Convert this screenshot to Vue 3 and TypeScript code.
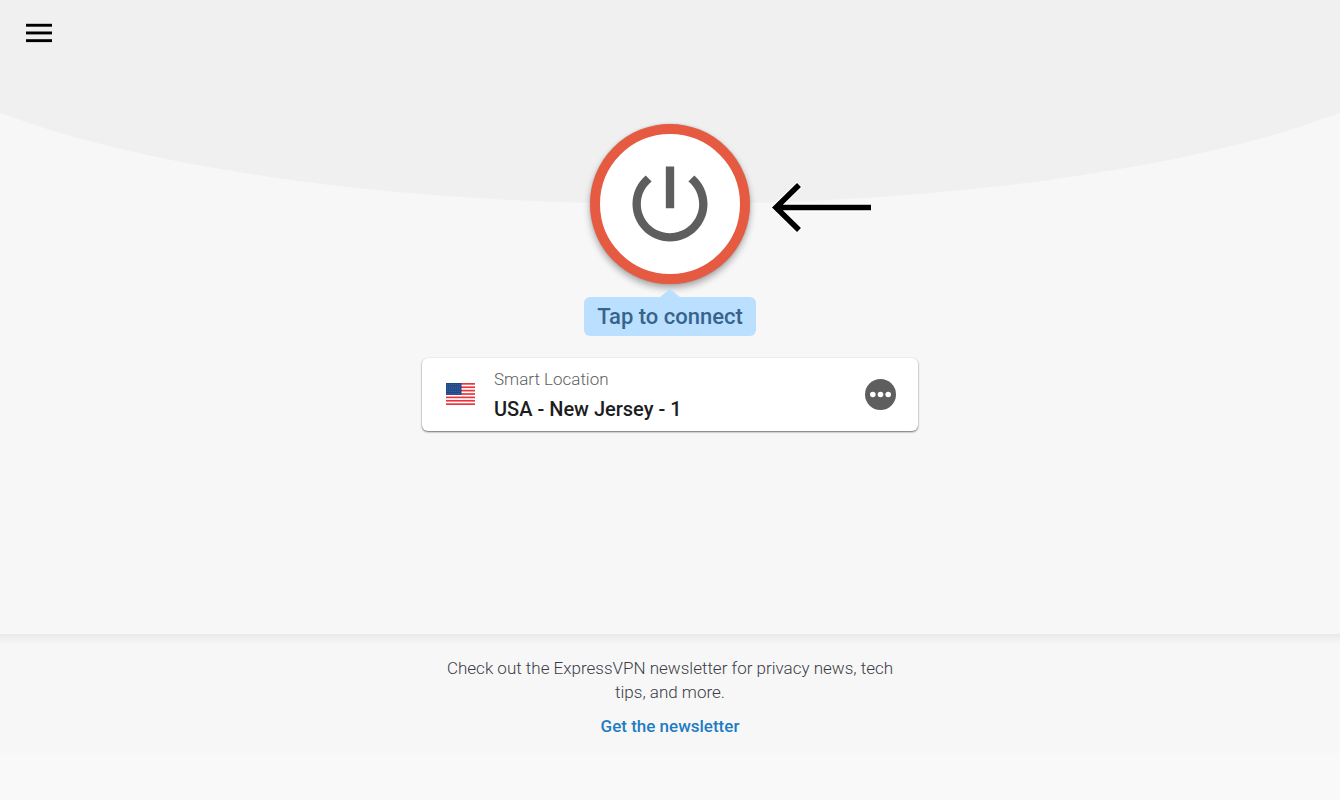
<script setup lang="ts">
import { ref } from 'vue'

const location = ref({ label: 'Smart Location', name: 'USA - New Jersey - 1' })
const stripes = [0, 2, 4, 6, 8, 10, 12]
const starRows = [1, 2, 3, 4, 5, 6]
const starCols = [1, 3, 5, 7, 9, 11, 13]
</script>

<template>
  <div class="app">
    <div class="backdrop" aria-hidden="true"></div>
    <header class="bar">
      <button class="menu" type="button" aria-label="Open menu">
        <svg viewBox="0 0 26 20" width="26" height="20" fill="#000">
          <rect y="0.800" width="26" height="2.900" />
          <rect y="8.500" width="26" height="2.900" />
          <rect y="16.200" width="26" height="2.900" />
        </svg>
      </button>
    </header>

    <main class="hero">
      <div class="power-wrap">
        <button class="power" type="button" aria-label="Connect">
          <svg viewBox="0 0 24 24" width="100" height="100" fill="#5e5e5e">
            <path d="M13 3h-2v10h2V3zm4.83 2.17l-1.42 1.42C17.99 7.86 19 9.81 19 12c0 3.87-3.13 7-7 7s-7-3.13-7-7c0-2.19 1.01-4.14 2.58-5.42L6.17 5.17C4.23 6.82 3 9.26 3 12c0 4.97 4.03 9 9 9s9-4.03 9-9c0-2.74-1.23-5.18-3.17-6.83z" />
          </svg>
        </button>
        <svg class="pointer" viewBox="0 0 104 56" width="104" height="56" fill="none" aria-hidden="true">
          <path d="M102 28.500H8M30.500 5.500L7 28.500L30.500 51.500" stroke="#fff" stroke-width="8" />
          <path d="M102 28.500H8M30 6L7 28.500L30 51" stroke="#000" stroke-width="5.600" />
        </svg>
      </div>

      <p class="tip">Tap to connect</p>

      <section class="card">
        <svg class="flag" viewBox="0 0 29 22" width="29" height="22" role="img" aria-label="United States">
          <rect width="29" height="22" fill="#fff" />
          <rect v-for="s in stripes" :key="s" :y="(s * 22) / 13" width="29" :height="22 / 13" fill="#e8343c" />
          <rect width="15.500" height="11.850" fill="#1f4788" />
          <template v-for="r in starRows" :key="r">
            <circle v-for="c in starCols" :key="c" :cx="c + (r % 2) * 0.8" :cy="r * 1.8 - 0.4" r="0.400" fill="#7f9cc9" />
          </template>
        </svg>
        <div class="place">
          <span class="label">{{ location.label }}</span>
          <strong class="name">{{ location.name }}</strong>
        </div>
        <button class="more" type="button" aria-label="Choose another location">
          <svg viewBox="0 0 31 31" width="31" height="31">
            <circle cx="15.500" cy="15.500" r="15.500" fill="#5e5e5e" />
            <g fill="#fff">
              <circle cx="7.800" cy="15.500" r="2.800" />
              <circle cx="15.500" cy="15.500" r="2.800" />
              <circle cx="23.200" cy="15.500" r="2.800" />
            </g>
          </svg>
        </button>
      </section>
    </main>

    <footer class="news">
      <p class="blurb">Check out the ExpressVPN newsletter for privacy news, tech tips, and more.</p>
      <a class="link" href="#newsletter">Get the newsletter</a>
    </footer>
    <div class="navbar" aria-hidden="true"></div>
  </div>
</template>

<style>
body {
  margin: 0;
}
</style>

<style scoped>
.app {
  position: relative;
  display: flex;
  flex-direction: column;
  min-height: 100vh;
  overflow: hidden;
  background: #f7f7f7;
  font-family: Roboto, "Noto Sans", sans-serif;
}
button {
  display: flex;
  align-items: center;
  justify-content: center;
  padding: 0;
  border: 0;
  background: none;
  cursor: pointer;
}
svg {
  display: block;
}
.backdrop {
  position: absolute;
  top: 0;
  left: -10%;
  width: 120%;
  height: 204px;
  border-radius: 0 0 50% 50% / 0 0 100% 100%;
  background: #f0f0f0;
}
.bar {
  position: relative;
  display: flex;
  padding: 23px 26px;
}
.hero {
  position: relative;
  flex: 1;
  display: flex;
  flex-direction: column;
  align-items: center;
  padding: 58px 16px 32px;
}
.power-wrap {
  position: relative;
}
.power {
  box-sizing: border-box;
  width: 160px;
  height: 160px;
  border: 10px solid #e55a40;
  border-radius: 50%;
  background: #fff;
  box-shadow: 0 4px 7px rgba(0, 0, 0, 0.32), 0 0 2px rgba(0, 0, 0, 0.2);
}
.pointer {
  position: absolute;
  top: 55px;
  left: 179px;
}
.tip {
  position: relative;
  margin: 13px 0 22px;
  padding: 0 13px;
  border-radius: 6px;
  background: #bbe0ff;
  color: #36648d;
  font-size: 22px;
  font-weight: 500;
  line-height: 39px;
}
.tip::before {
  content: "";
  position: absolute;
  bottom: 100%;
  left: 50%;
  margin-left: -10px;
  border: 10px solid transparent;
  border-top: 0;
  border-bottom: 8px solid #bbe0ff;
}
.card {
  box-sizing: border-box;
  display: flex;
  align-items: center;
  width: 100%;
  max-width: 496px;
  padding: 6px 22px 7px 24px;
  border-radius: 6px;
  background: #fff;
  box-shadow: 0 1px 2px rgba(0, 0, 0, 0.55), 0 0 2px rgba(0, 0, 0, 0.06);
}
.place {
  flex: 1;
  display: flex;
  flex-direction: column;
  margin-left: 19px;
}
.label {
  color: #5e5e5e;
  font-size: 17px;
  font-weight: 300;
  line-height: 30px;
}
.name {
  color: #1c1d22;
  font-size: 20px;
  font-weight: 500;
  line-height: 30px;
}
.news {
  position: relative;
  display: flex;
  flex-direction: column;
  align-items: center;
  padding: 22px 16px 15px;
  background: linear-gradient(#e9e9e9, #f7f7f7 10px);
  text-align: center;
}
.blurb {
  max-width: 460px;
  margin: 0 0 10px;
  color: #3a3d47;
  font-size: 17px;
  font-weight: 300;
  line-height: 24px;
}
.link {
  color: #1f7cc4;
  font-size: 17px;
  font-weight: 500;
  line-height: 24px;
  text-decoration: none;
}
.navbar {
  height: 47px;
  background: #f9f9f9;
}
</style>
